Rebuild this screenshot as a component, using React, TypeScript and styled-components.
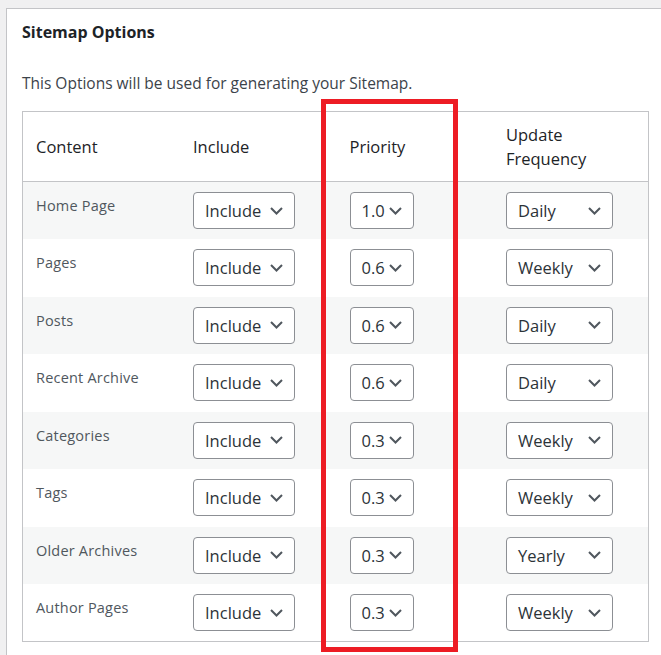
import React from 'react';
import styled, { createGlobalStyle } from 'styled-components';

const GlobalStyle = createGlobalStyle`
  html, body {
    margin: 0;
    padding: 0;
    background: #f0f0f1;
    overflow: hidden;
  }
  body {
    font-family: "Open Sans", "Noto Sans", "Liberation Sans", sans-serif;
    color: #1d2327;
  }
`;

const Page = styled.div`
  padding: 8px 0 0 6px;
  height: 655px;
  box-sizing: border-box;
`;

const Card = styled.div`
  position: relative;
  width: 700px;
  min-height: 700px;
  background: #fff;
  border: 1px solid #c3c4c7;
  padding: 11px 0 0 15px;
  box-sizing: border-box;
`;

const Title = styled.h2`
  margin: 0;
  font-size: 16px;
  font-weight: 700;
  line-height: 24px;
  color: #1d2327;
`;

const Description = styled.p`
  margin: 27px 0 0 0;
  font-size: 15.5px;
  line-height: 24px;
  color: #3c434a;
`;

const Table = styled.table`
  margin-top: 16px;
  width: 627px;
  table-layout: fixed;
  border-collapse: collapse;
  border: 1px solid #c3c4c7;
  background: #fff;
`;

const HeadCell = styled.th`
  height: 69px;
  padding: 0 13px 0 14px;
  text-align: left;
  vertical-align: middle;
  font-size: 16.5px;
  font-weight: 400;
  line-height: 24px;
  color: #1d2327;
  border-bottom: 1px solid #c3c4c7;

  &:first-child {
    padding-left: 13px;
  }
`;

const Row = styled.tr<{ $striped: boolean }>`
  background: ${(p) => (p.$striped ? '#f6f7f7' : '#fff')};
`;

const LabelCell = styled.td`
  height: 57.5px;
  box-sizing: border-box;
  padding: 14px 13px 0 13px;
  vertical-align: top;
  font-size: 14.5px;
  line-height: 20px;
  letter-spacing: 0.2px;
  color: #50575e;
`;

const SelectCell = styled.td`
  height: 57.5px;
  box-sizing: border-box;
  padding: 10px 13px 0 14px;
  vertical-align: top;
`;

const SelectBox = styled.div<{ $width: number }>`
  display: flex;
  align-items: center;
  justify-content: space-between;
  width: ${(p) => p.$width}px;
  height: 37px;
  box-sizing: border-box;
  padding: 0 11px 0 11px;
  border: 1px solid #8c8f94;
  border-radius: 4px;
  background: #fff;
  font-size: 16.5px;
  color: #2c3338;
  cursor: pointer;
`;

const Chevron = styled.svg`
  width: 13px;
  height: 8px;
  flex-shrink: 0;
`;

const Highlight = styled.div`
  position: absolute;
  left: 314px;
  top: 90px;
  width: 137px;
  height: 553px;
  border: 5px solid #ed1c24;
  box-sizing: border-box;
  pointer-events: none;
`;

const Select: React.FC<{ value: string; width: number }> = ({ value, width }) => (
  <SelectBox $width={width}>
    <span>{value}</span>
    <Chevron viewBox="0 0 13 8">
      <path d="M1 1l5.5 5.5L12 1" fill="none" stroke="#50575e" strokeWidth="2" />
    </Chevron>
  </SelectBox>
);

const rows = [
  { label: 'Home Page', priority: '1.0', freq: 'Daily' },
  { label: 'Pages', priority: '0.6', freq: 'Weekly' },
  { label: 'Posts', priority: '0.6', freq: 'Daily' },
  { label: 'Recent Archive', priority: '0.6', freq: 'Daily' },
  { label: 'Categories', priority: '0.3', freq: 'Weekly' },
  { label: 'Tags', priority: '0.3', freq: 'Weekly' },
  { label: 'Older Archives', priority: '0.3', freq: 'Yearly' },
  { label: 'Author Pages', priority: '0.3', freq: 'Weekly' },
];

const App: React.FC = () => (
  <>
    <GlobalStyle />
    <Page>
      <Card>
        <Title>Sitemap Options</Title>
        <Description>This Options will be used for generating your Sitemap.</Description>
        <Table>
          <thead>
            <tr>
              <HeadCell>Content</HeadCell>
              <HeadCell>Include</HeadCell>
              <HeadCell>Priority</HeadCell>
              <HeadCell>Update Frequency</HeadCell>
            </tr>
          </thead>
          <tbody>
            {rows.map((r, i) => (
              <Row key={r.label} $striped={i % 2 === 0}>
                <LabelCell>{r.label}</LabelCell>
                <SelectCell>
                  <Select value="Include" width={102} />
                </SelectCell>
                <SelectCell>
                  <Select value={r.priority} width={64} />
                </SelectCell>
                <SelectCell>
                  <Select value={r.freq} width={107} />
                </SelectCell>
              </Row>
            ))}
          </tbody>
        </Table>
        <Highlight />
      </Card>
    </Page>
  </>
);

export default App;
